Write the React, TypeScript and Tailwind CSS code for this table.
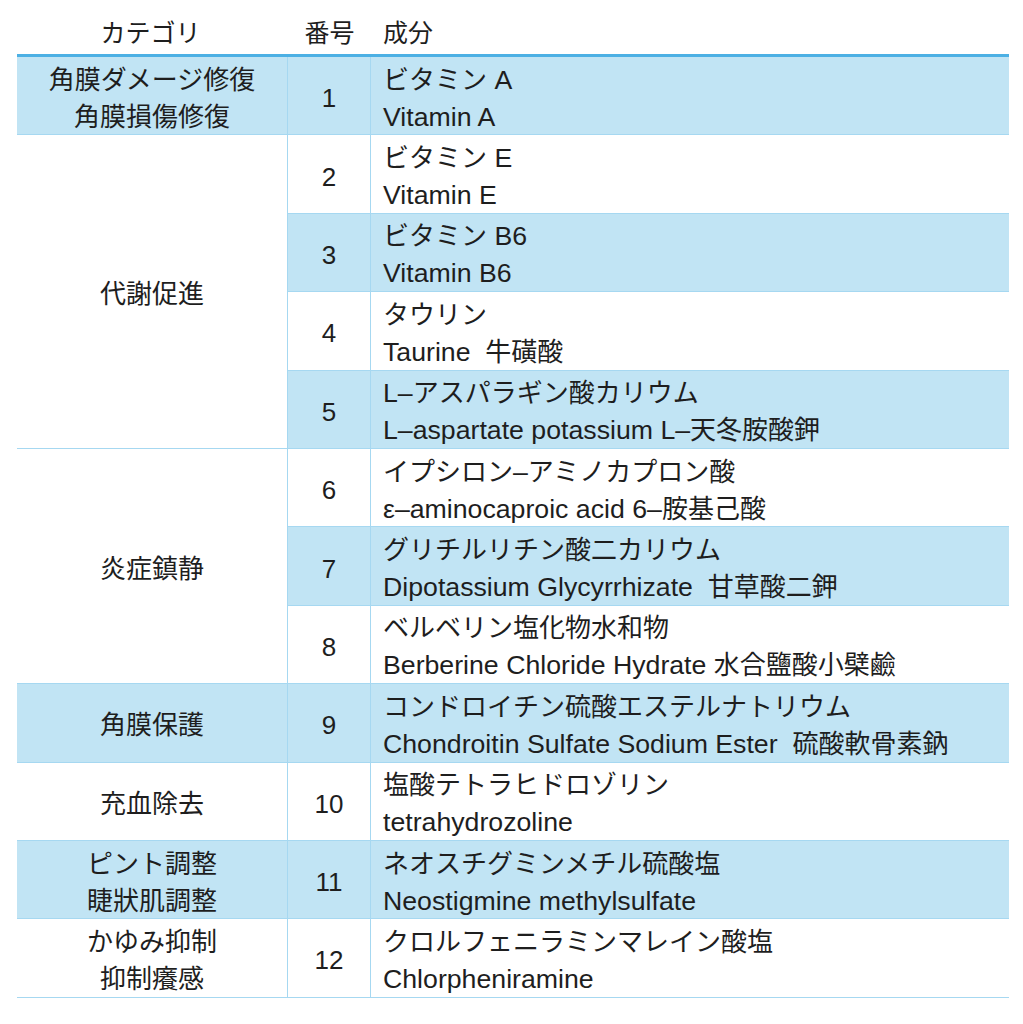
import React from "react";

type Row = { no: number; ja: string; en: string };

const rows: Row[] = [
  { no: 1, ja: "ビタミン A", en: "Vitamin A" },
  { no: 2, ja: "ビタミン E", en: "Vitamin E" },
  { no: 3, ja: "ビタミン B6", en: "Vitamin B6" },
  { no: 4, ja: "タウリン", en: "Taurine  牛磺酸" },
  { no: 5, ja: "L–アスパラギン酸カリウム", en: "L–aspartate potassium L–天冬胺酸鉀" },
  { no: 6, ja: "イプシロン–アミノカプロン酸", en: "ε–aminocaproic acid 6–胺基己酸" },
  { no: 7, ja: "グリチルリチン酸二カリウム", en: "Dipotassium Glycyrrhizate  甘草酸二鉀" },
  { no: 8, ja: "ベルベリン塩化物水和物", en: "Berberine Chloride Hydrate 水合鹽酸小檗鹼" },
  { no: 9, ja: "コンドロイチン硫酸エステルナトリウム", en: "Chondroitin Sulfate Sodium Ester  硫酸軟骨素鈉" },
  { no: 10, ja: "塩酸テトラヒドロゾリン", en: "tetrahydrozoline" },
  { no: 11, ja: "ネオスチグミンメチル硫酸塩", en: "Neostigmine methylsulfate" },
  { no: 12, ja: "クロルフェニラミンマレイン酸塩", en: "Chlorpheniramine" },
];

type Cat = { lines: string[]; span: number; start: number };

const cats: Cat[] = [
  { lines: ["角膜ダメージ修復", "角膜損傷修復"], span: 1, start: 1 },
  { lines: ["代謝促進"], span: 4, start: 2 },
  { lines: ["炎症鎮静"], span: 3, start: 6 },
  { lines: ["角膜保護"], span: 1, start: 9 },
  { lines: ["充血除去"], span: 1, start: 10 },
  { lines: ["ピント調整", "睫狀肌調整"], span: 1, start: 11 },
  { lines: ["かゆみ抑制", "抑制癢感"], span: 1, start: 12 },
];

const spanClass: Record<number, string> = {
  1: "row-span-1",
  3: "row-span-3",
  4: "row-span-4",
};

const FONT = {
  fontFamily: '"Liberation Sans", "Noto Sans CJK JP", sans-serif',
};

// Latin runs are set slightly larger so that they match the reference's wider Latin face
function Mixed({ text }: { text: string }) {
  const parts = text.match(/[\u0000-\u02ff\u0370-\u03ff\u2000-\u206f]+|[^\u0000-\u02ff\u0370-\u03ff\u2000-\u206f]+/g) || [];
  return (
    <>
      {parts.map((p, i) =>
        /^[\u0000-\u02ff\u0370-\u03ff\u2000-\u206f]+$/.test(p) ? (
          <span key={i} className="text-[26.7px]">
            {p}
          </span>
        ) : (
          <span key={i}>{p}</span>
        )
      )}
    </>
  );
}

export default function App() {
  return (
    <div
      className="w-[1023px] h-[1024px] bg-white text-[#1e1e1e] pl-[17px]"
      style={FONT}
    >
      {/* header */}
      <div className="w-[992px] grid grid-cols-[271px_83px_638px] h-[57px] border-b-[3px] border-[#4cb0e4] text-[25px] leading-[36px]">
        <div className="pt-[15px] text-center pr-[4px]">カテゴリ</div>
        <div className="pt-[15px] text-center">番号</div>
        <div className="pt-[15px] pl-[12px]">成分</div>
      </div>

      {/* body */}
      <div className="w-[992px] grid grid-cols-[271px_83px_638px] grid-rows-[repeat(12,78.4px)]">
        {cats.map((c) => {
          const blue = c.start % 2 === 1;
          return (
            <div
              key={c.start}
              className={`${spanClass[c.span]} col-start-1 border-b border-r border-[#a6d8f1] flex flex-col items-center justify-center pt-[6px] text-[26px] leading-[37px] ${
                blue ? "bg-[#c1e4f4]" : "bg-white"
              }`}
              style={{ gridRowStart: c.start, gridRowEnd: c.start + c.span }}
            >
              {c.lines.map((l) => (
                <div key={l}>{l}</div>
              ))}
            </div>
          );
        })}
        {rows.map((r) => {
          const blue = r.no % 2 === 1;
          const bg = blue ? "bg-[#c1e4f4]" : "bg-white";
          return (
            <React.Fragment key={r.no}>
              <div
                className={`col-start-2 border-b border-r border-[#a6d8f1] flex items-center justify-center pt-[6px] text-[26px] ${bg}`}
                style={{ gridRowStart: r.no }}
              >
                {r.no}
              </div>
              <div
                className={`col-start-3 border-b border-[#a6d8f1] flex flex-col justify-center pt-[6px] pl-[12px] text-[26px] leading-[37px] whitespace-pre ${bg}`}
                style={{ gridRowStart: r.no }}
              >
                <div>
                  <Mixed text={r.ja} />
                </div>
                <div>
                  <Mixed text={r.en} />
                </div>
              </div>
            </React.Fragment>
          );
        })}
      </div>
    </div>
  );
}
